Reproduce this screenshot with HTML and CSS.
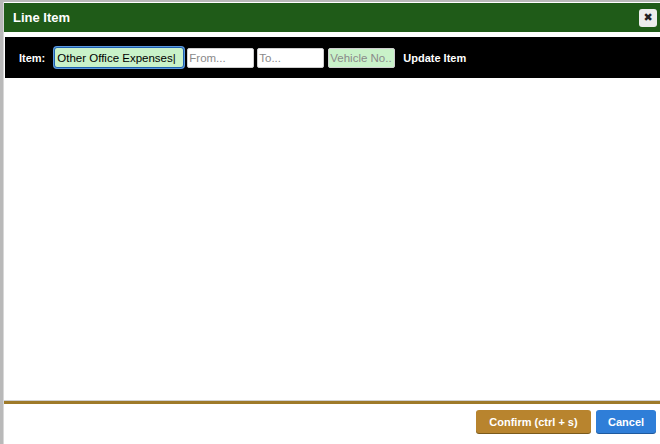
FILE: index.html
```html
<!DOCTYPE html>
<html lang="en">
<head>
  <meta charset="UTF-8">
  <title>Line Item</title>
  <link rel="stylesheet" href="styles.css">
</head>
<body>
  <div class="dialog">
    <div class="titlebar">
      <span class="title">Line Item</span>
      <button class="close-btn" title="Close">&#10006;</button>
    </div>

    <div class="toolbar">
      <label class="item-label">Item:</label>
      <input type="text" class="field field-item focused" value="Other Office Expenses|">
      <input type="text" class="field field-small" placeholder="From...">
      <input type="text" class="field field-small" placeholder="To...">
      <input type="text" class="field field-small field-green" placeholder="Vehicle No..">
      <span class="update-link">Update Item</span>
    </div>

    <div class="content"></div>

    <div class="footer">
      <button class="btn btn-confirm">Confirm (ctrl + s)</button>
      <button class="btn btn-cancel">Cancel</button>
    </div>
  </div>
</body>
</html>
```

FILE: styles.css
```css
html, body {
  margin: 0;
  height: 100%;
}
body {
  font-family: "Liberation Sans", Arial, sans-serif;
  background-color: #b9b9b9;
  overflow: hidden;
}
.dialog {
  margin: 2px 0 0 3px;
  height: 442px;
  background-color: #fff;
  border-left: 1px solid #d8d8d8;
  display: flex;
  flex-direction: column;
  box-sizing: border-box;
}
.titlebar {
  height: 29px;
  margin-top: 1px;
  background-color: #1f5b18;
  display: flex;
  align-items: center;
  justify-content: space-between;
  padding: 0 3px 0 9px;
}
.title {
  color: #fff;
  font-weight: bold;
  font-size: 13px;
}
.close-btn {
  width: 18px;
  height: 18px;
  padding: 0;
  border: none;
  border-radius: 3px;
  background-color: #ededed;
  color: #222;
  font-size: 11px;
  line-height: 18px;
  font-family: "DejaVu Sans", sans-serif;
  font-weight: bold;
  cursor: pointer;
}
.toolbar {
  margin: 5px 0 0 1px;
  height: 41px;
  background-color: #000;
  display: flex;
  align-items: center;
  padding-left: 14px;
  gap: 3px;
}
.item-label {
  color: #fff;
  font-weight: bold;
  font-size: 11px;
  margin-right: 6px;
}
.field {
  height: 20px;
  box-sizing: border-box;
  border: 1px solid #cfcfcf;
  border-radius: 2px;
  font-family: "Liberation Sans", Arial, sans-serif;
  font-size: 11.5px;
  padding: 0 1px;
  background-color: #fff;
  color: #000;
  outline: none;
}
.field::placeholder {
  color: #8a8a8a;
}
.field-item {
  width: 130px;
  height: 21px;
  padding: 0 2px;
  background-color: #c9f2c9;
}
.focused {
  border: 1px solid #1c5fae;
  border-radius: 3px;
  box-shadow: 0 0 0 1px #5d9ae0;
}
.field-small {
  width: 67px;
}
.field-green {
  background-color: #c9f2c9;
  margin-left: 1px;
}
.update-link {
  color: #fff;
  font-weight: bold;
  font-size: 11px;
  margin-left: 5px;
}
.content {
  flex: 1;
}
.footer {
  border-top: 1px solid #d0d0d0;
  padding-top: 6px;
  height: 37px;
  display: flex;
  justify-content: flex-end;
  align-items: flex-start;
  padding-right: 4px;
  gap: 5px;
  position: relative;
}
.footer::before {
  content: "";
  position: absolute;
  left: 0;
  right: 0;
  top: 0;
  height: 3px;
  background-color: #9e7a29;
}
.btn {
  height: 23px;
  border: none;
  border-radius: 3px;
  color: #fff;
  font-family: "Liberation Sans", Arial, sans-serif;
  font-weight: bold;
  font-size: 11px;
  padding: 0 12px;
  margin-top: 3px;
  cursor: pointer;
}
.btn-confirm {
  width: 115px;
  background-color: #b8842e;
  box-shadow: 0 1px 0 #7a5a1c;
}
.btn-cancel {
  width: 60px;
  background-color: #2f7ed8;
  box-shadow: 0 1px 0 #1f5a9e;
}
```
